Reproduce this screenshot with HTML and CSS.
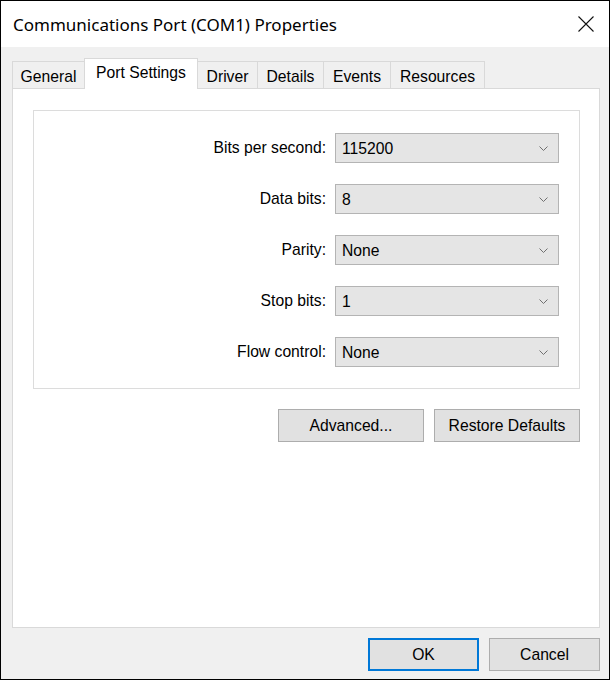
FILE: index.html
```html
<!DOCTYPE html>
<html lang="en">

<head>
    <meta charset="UTF-8">
    <title>Communications Port (COM1) Properties</title>
    <link rel="stylesheet" href="styles.css">
</head>

<body>
    <div class="window">
        <div class="titlebar">
            <span class="title">Communications Port (COM1) Properties</span>
            <svg class="close" width="16" height="16" viewBox="0 0 16 16">
                <path d="M0.5 0.5 L15.5 15.5 M15.5 0.5 L0.5 15.5" stroke="#111" stroke-width="1.1" fill="none" />
            </svg>
        </div>
        <div class="content">
            <div class="tabs">
                <div class="tab tab-general">General</div>
                <div class="tab tab-port active">Port Settings</div>
                <div class="tab tab-driver">Driver</div>
                <div class="tab tab-details">Details</div>
                <div class="tab tab-events">Events</div>
                <div class="tab tab-resources">Resources</div>
            </div>
            <div class="panel">
                <div class="group">
                    <div class="row">
                        <label class="label">Bits per second:</label>
                        <div class="combo"><span>115200</span><svg class="chevron" width="9" height="5" viewBox="0 0 9 5"><path d="M0.5 0.5 L4.5 4.5 L8.5 0.5" /></svg></div>
                    </div>
                    <div class="row">
                        <label class="label">Data bits:</label>
                        <div class="combo"><span>8</span><svg class="chevron" width="9" height="5" viewBox="0 0 9 5"><path d="M0.5 0.5 L4.5 4.5 L8.5 0.5" /></svg></div>
                    </div>
                    <div class="row">
                        <label class="label">Parity:</label>
                        <div class="combo"><span>None</span><svg class="chevron" width="9" height="5" viewBox="0 0 9 5"><path d="M0.5 0.5 L4.5 4.5 L8.5 0.5" /></svg></div>
                    </div>
                    <div class="row">
                        <label class="label">Stop bits:</label>
                        <div class="combo"><span>1</span><svg class="chevron" width="9" height="5" viewBox="0 0 9 5"><path d="M0.5 0.5 L4.5 4.5 L8.5 0.5" /></svg></div>
                    </div>
                    <div class="row">
                        <label class="label">Flow control:</label>
                        <div class="combo"><span>None</span><svg class="chevron" width="9" height="5" viewBox="0 0 9 5"><path d="M0.5 0.5 L4.5 4.5 L8.5 0.5" /></svg></div>
                    </div>
                </div>
                <div class="panel-buttons">
                    <button class="btn btn-wide">Advanced...</button>
                    <button class="btn btn-wide">Restore Defaults</button>
                </div>
            </div>
            <div class="footer">
                <button class="btn btn-footer default">OK</button>
                <button class="btn btn-footer">Cancel</button>
            </div>
        </div>
    </div>
</body>

</html>
```

FILE: styles.css
```css
body {
    margin: 0;
    font-family: "Liberation Sans", Arial, sans-serif;
    font-size: 15.7px;
    color: #000;
}

.window {
    width: 610px;
    height: 680px;
    box-sizing: border-box;
    border: 1px solid #000;
    background: #f0f0f0;
    display: flex;
    flex-direction: column;
}

.titlebar {
    height: 46px;
    flex-shrink: 0;
    background: #fff;
    display: flex;
    align-items: center;
    justify-content: space-between;
    padding: 0 15px 0 12px;
}

.title {
    font-family: "Noto Sans", "Open Sans", sans-serif;
    font-size: 17px;
    color: #000;
}

.content {
    padding: 11px 9px 0 11px;
}

.tabs {
    display: flex;
    align-items: flex-end;
    height: 30px;
}

.tab {
    height: 27px;
    box-sizing: border-box;
    border: 1px solid #d9d9d9;
    border-bottom: none;
    margin-left: -1px;
    display: flex;
    align-items: center;
    justify-content: center;
    padding-top: 3px;
    background: #f0f0f0;
}

.tab:first-child {
    margin-left: 0;
}

.tab.active {
    height: 31px;
    margin-bottom: -1px;
    background: #fff;
    position: relative;
    z-index: 1;
    padding-top: 0;
    padding-bottom: 3px;
}

.tab-general { width: 73px; }
.tab-port { width: 114px; }
.tab-driver { width: 61px; }
.tab-details { width: 67px; }
.tab-events { width: 68px; }
.tab-resources { width: 95px; }

.panel {
    height: 540px;
    box-sizing: border-box;
    border: 1px solid #d9d9d9;
    background: #fff;
    padding: 21px 19px 0 20px;
}

.group {
    height: 279px;
    box-sizing: border-box;
    border: 1px solid #dcdcdc;
    padding: 22px 20px 0 0;
    display: flex;
    flex-direction: column;
    gap: 21px;
}

.row {
    display: flex;
    justify-content: flex-end;
    align-items: center;
    gap: 9px;
}

.combo {
    width: 224px;
    height: 30px;
    box-sizing: border-box;
    border: 1px solid #b4b4b4;
    background: #e5e5e5;
    display: flex;
    align-items: center;
    justify-content: space-between;
    padding: 1px 10px 0 6px;
}

.chevron path {
    fill: none;
    stroke: #707070;
    stroke-width: 1;
}

.panel-buttons {
    display: flex;
    justify-content: flex-end;
    gap: 10px;
    margin-top: 20px;
}

.btn {
    font-family: inherit;
    font-size: 15.7px;
    color: #000;
    height: 33px;
    box-sizing: border-box;
    border: 1px solid #adadad;
    background: #e1e1e1;
    padding: 0;
}

.btn-wide {
    width: 146px;
}

.btn-footer {
    width: 111px;
}

.btn.default {
    border: 2px solid #0078d7;
}

.footer {
    display: flex;
    justify-content: flex-end;
    gap: 10px;
    margin-top: 10px;
}
```
